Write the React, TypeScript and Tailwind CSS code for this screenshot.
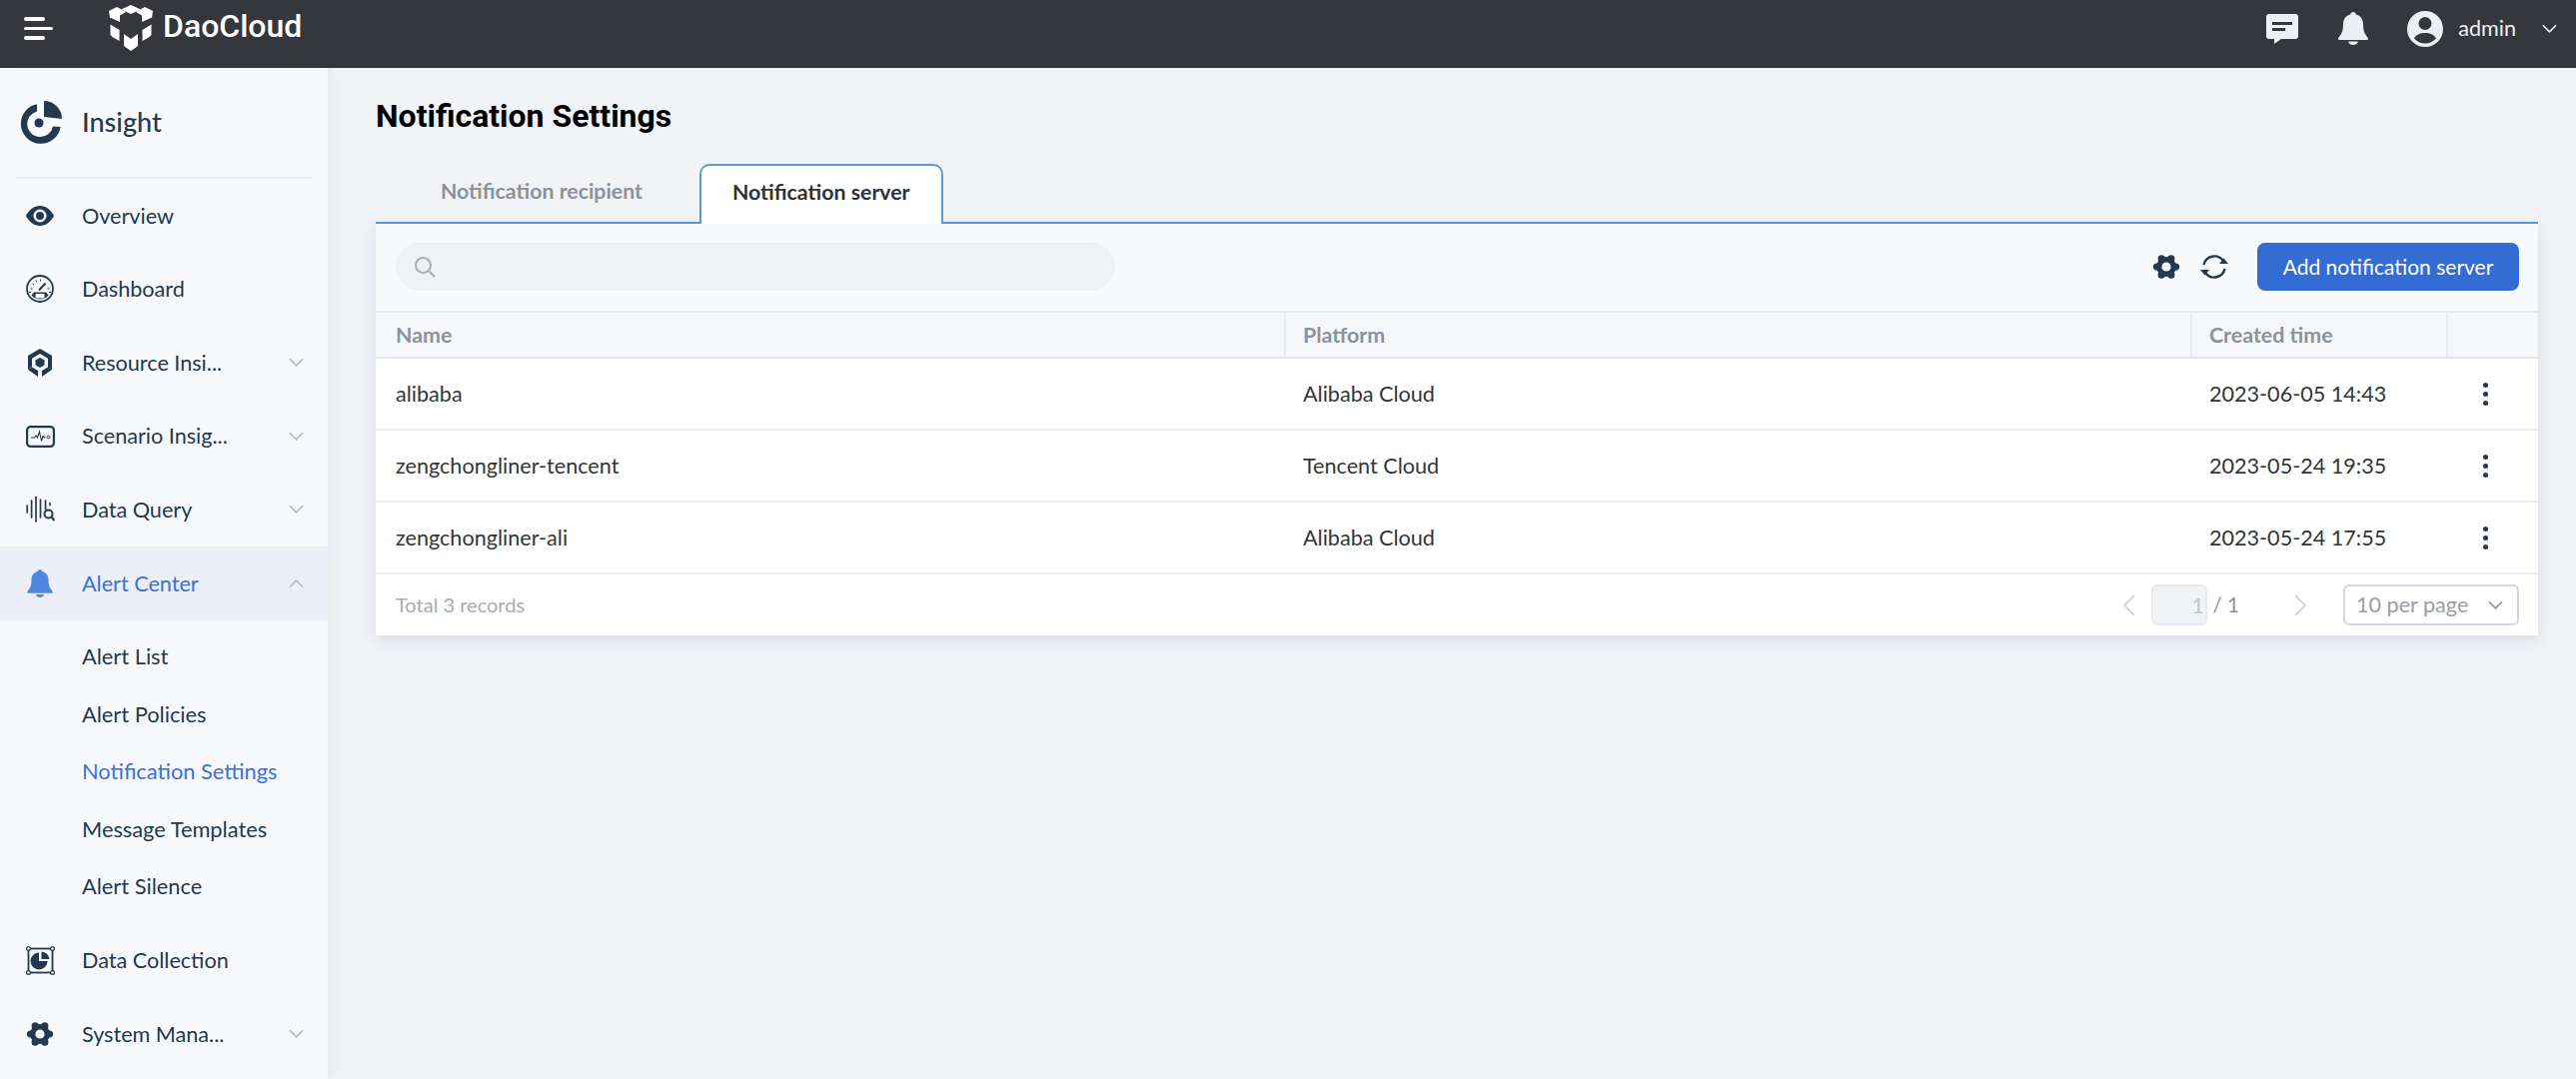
import React from 'react';

const navText = "text-[21.6px] text-[#24394f]";

function Chevron({ up = false, className = "" }: { up?: boolean; className?: string }) {
  return (
    <svg viewBox="0 0 16 10" className={`w-[15px] h-[10px] ${className}`} fill="none" stroke="currentColor" strokeWidth="1.8">
      <path d={up ? "M1 9 8 2l7 7" : "M1 1l7 7 7-7"} />
    </svg>
  );
}

function Gear({ className = "" }: { className?: string }) {
  return (
    <svg viewBox="0 0 28 28" className={className} fill="#24394f">
      <circle cx="14" cy="14" r="10" />
      <circle cx="4.5" cy="14" r="3.6" />
      <circle cx="23.5" cy="14" r="3.6" />
      <circle cx="9.2" cy="5.8" r="3.6" />
      <circle cx="18.8" cy="5.8" r="3.6" />
      <circle cx="9.2" cy="22.2" r="3.6" />
      <circle cx="18.8" cy="22.2" r="3.6" />
      <circle cx="14" cy="14" r="4.6" fill="#f8f9fb" />
    </svg>
  );
}

function Bell({ className = "", fill }: { className?: string; fill: string }) {
  return (
    <svg viewBox="0 0 30 33" className={className} fill={fill}>
      <path d="M15 0c1.5 0 2.6 1 2.8 2.4 4.6 1.2 7.2 5 7.2 9.600 0 5.500 1 9.500 3.700 12.400.9 1 1.300 1.700 1.300 2.400 0 .8-.7 1.200-1.700 1.200H1.700C.7 28 0 27.600 0 26.800c0-.7.400-1.400 1.300-2.400C4 21.500 5 17.500 5 12c0-4.600 2.600-8.400 7.200-9.600C12.400 1 13.500 0 15 0Z" />
      <path d="M10.200 29.500h9.600c-.2 2-2.200 3.500-4.800 3.500s-4.600-1.500-4.800-3.500Z" />
    </svg>
  );
}

const icons: Record<string, React.ReactNode> = {
  eye: (
    <svg viewBox="0 0 28 20" className="w-[28px] h-[20px]" fill="#24394f">
      <path fillRule="evenodd" d="M14 0c6 0 11 4 14 10-3 6-8 10-14 10S3 16 0 10C3 4 8 0 14 0Zm0 3.5a6.5 6.5 0 1 0 0 13 6.5 6.5 0 0 0 0-13Zm0 2.5a4 4 0 1 1 0 8 4 4 0 0 1 0-8Z" />
    </svg>
  ),
  dash: (
    <svg viewBox="0 0 28 28" className="w-[28px] h-[28px]" fill="none" stroke="#24394f">
      <circle cx="14" cy="14" r="13" strokeWidth="1.8" />
      <path d="M5.5 20.5A11 11 0 0 0 22.5 20.5L20 17.500H8Z" fill="#24394f" strokeWidth="0" />
      <rect x="9.5" y="19" width="9" height="4.5" rx="1" fill="#f7f9fc" strokeWidth="0" />
      <path d="M13 15.5l6.5-7" strokeWidth="2" />
      <path d="M4.5 14h2M6.5 9l1.5 1M10 5.5l.7 1.700M14.5 4.500v2M21.5 14h2M3 17.500h2M25 17.500h-2" strokeWidth="1" />
    </svg>
  ),
  hex: (
    <svg viewBox="0 0 24 28" className="w-[24px] h-[28px]" fill="#24394f">
      <path d="M12 0l4.5 2.600-4.500 2.500-8 4.600v8.800l-4 2.300V7ZM12 0l12 7v14l-4-2.300V9.700l-8-4.600Z" />
      <path d="M0 21l4-2.500 6 3.600V28Z M24 21l-4-2.500-6 3.600V28Z" />
      <path d="M12 9l4.5 2.500v5L12 19l-4.500-2.500v-5Z" />
    </svg>
  ),
  monitor: (
    <svg viewBox="0 0 29 22" className="w-[29px] h-[22px]" fill="none" stroke="#24394f">
      <rect x="1.1" y="1.1" width="26.8" height="19.8" rx="3.5" strokeWidth="2.2" />
      <path d="M5 12h3.5l1.500-2 1.500 2 2-6 2 9.500 1.500-5 1.500 1.500h1" strokeWidth="1.1" />
      <circle cx="22.5" cy="11.5" r="1.4" strokeWidth="1" />
    </svg>
  ),
  query: (
    <svg viewBox="0 0 29 26" className="w-[29px] h-[26px]" fill="none" stroke="#24394f">
      <path d="M1.2 9v7M5.6 4v17M10 0v25M14.5 3v18M19.5 4v9M24 6.5v2" strokeWidth="1.7" strokeLinecap="round" />
      <circle cx="22.5" cy="17.5" r="4" strokeWidth="2" />
      <path d="M25.5 20.5l3 3.5" strokeWidth="2.2" />
    </svg>
  ),
  bell: <Bell className="w-[26px] h-[28px]" fill="#4f86e0" />,
  collect: (
    <svg viewBox="0 0 29 29" className="w-[29px] h-[29px]" fill="none" stroke="#24394f">
      <rect x="2.5" y="2.5" width="24" height="24" strokeWidth="1.8" />
      <path d="M13 6.500v8.500h8.500A8.500 8.500 0 1 1 13 6.500Z" fill="#24394f" strokeWidth="0" />
      <path d="M15.5 5.5a8.5 8.5 0 0 1 8 7.500h-8Z" fill="#24394f" strokeWidth="0" />
      <g fill="#f7f9fc" strokeWidth="1.2">
        <circle cx="2.5" cy="2.5" r="1.9" />
        <circle cx="26.5" cy="2.5" r="1.9" />
        <circle cx="2.5" cy="26.5" r="1.9" />
        <circle cx="26.5" cy="26.5" r="1.9" />
      </g>
    </svg>
  ),
  gear: <Gear className="w-[28px] h-[28px]" />,
};

function NavRow({ icon, label, chevron, active }: { icon: string; label: string; chevron?: "up" | "down"; active?: boolean }) {
  return (
    <div className={`h-[73.6px] flex items-center shrink-0 ${active ? "bg-[#ebeff7]" : ""}`}>
      <div className="w-[82px] flex justify-center pr-[2px] shrink-0">{icons[icon]}</div>
      <span className={active ? "text-[21.6px] text-[#3a72d8]" : navText}>{label}</span>
      {chevron && <Chevron up={chevron === "up"} className="ml-auto mr-[24px] text-[#b4b9c2]" />}
    </div>
  );
}

function SubRow({ label, active }: { label: string; active?: boolean }) {
  return (
    <div className={`h-[57.6px] flex items-center pl-[82px] text-[21.8px] ${active ? "text-[#3a72d8]" : "text-[#24394f]"}`}>
      {label}
    </div>
  );
}

const rows = [
  { name: "alibaba", platform: "Alibaba Cloud", time: "2023-06-05 14:43" },
  { name: "zengchongliner-tencent", platform: "Tencent Cloud", time: "2023-05-24 19:35" },
  { name: "zengchongliner-ali", platform: "Alibaba Cloud", time: "2023-05-24 17:55" },
];

function Kebab() {
  return (
    <div className="flex flex-col items-center gap-[4px] pr-[16px]">
      <span className="w-[5px] h-[5px] rounded-full bg-[#24394f]" />
      <span className="w-[5px] h-[5px] rounded-full bg-[#24394f]" />
      <span className="w-[5px] h-[5px] rounded-full bg-[#24394f]" />
    </div>
  );
}

export default function App() {
  return (
    <div className="h-[1080px] w-[2578px] overflow-hidden flex flex-col bg-[#f1f3f7] font-['Lato','Liberation_Sans',sans-serif]">
      <header className="h-[68px] shrink-0 bg-[#36373d] flex items-center pb-[11px]">
        <div className="w-[109px] pl-[24px] shrink-0 flex flex-col gap-[6px]">
          <span className="block w-[21px] h-[3.5px] rounded-full bg-white" />
          <span className="block w-[29px] h-[3.5px] rounded-full bg-white" />
          <span className="block w-[21px] h-[3.5px] rounded-full bg-white" />
        </div>
        <svg viewBox="0 0 44 47" className="w-[44px] h-[47px]" fill="#fff">
          <path d="M22 0l10 4.5L22 9 12 4.5Z" />
          <path d="M0 6l8-4 9 5-6 3.5V17L1 12.5Z" />
          <path d="M44 6l-8-4-9 5 6 3.5V17l10-4.5Z" />
          <path d="M1.500 19.500l9 5.500v11l-7-4-2-2Z" />
          <path d="M42.500 19.500l-9 5.500v11l7-4 2-2Z" />
          <path d="M15 29l7 5 7-5v12l-7 5-7-5Z" />
        </svg>
        <span className="ml-[10px] -mt-[6px] text-[32px] leading-none font-medium text-white font-['Roboto',sans-serif]">DaoCloud</span>
        <div className="ml-auto flex items-center">
          <svg viewBox="0 0 32 30" className="w-[32px] h-[30px]" fill="#eceff6">
            <path d="M3 0h26a3 3 0 0 1 3 3v19a3 3 0 0 1-3 3H15l-7 5v-5H3a3 3 0 0 1-3-3V3a3 3 0 0 1 3-3Z" />
            <path d="M6 8h20v3H6ZM6 14h13v3H6Z" fill="#36373d" />
          </svg>
          <Bell className="ml-[40px] w-[30px] h-[33px]" fill="#eceff6" />
          <svg viewBox="0 0 36 36" className="ml-[39px] w-[36px] h-[36px]" fill="#eceff6">
            <path fillRule="evenodd" d="M18 0a18 18 0 1 1 0 36 18 18 0 0 1 0-36Zm0 6a6.5 6.5 0 1 0 0 13 6.5 6.5 0 0 0 0-13Zm0 16c-5 0-9.500 2-11 5.500 2.700 3 6.700 5 11 5s8.300-2 11-5C27.500 24 23 22 18 22Z" />
          </svg>
          <span className="ml-[15px] text-[21.6px] text-[#eceff6]">admin</span>
          <Chevron className="ml-[26px] mr-[19px] text-[#eceff6]" />
        </div>
      </header>

      <div className="flex-1 flex min-h-0">
        <aside className="w-[328px] shrink-0 bg-[#f7f9fc] shadow-[2px_0_10px_rgba(30,40,70,0.08)] flex flex-col">
          <div className="h-[111px] mx-[16px] border-b-2 border-[#e9ecf1] shrink-0 flex items-center">
            <svg viewBox="0 0 42 43" className="ml-[4px] w-[42px] h-[43px]" fill="#24394f">
              <path d="M24 0a18 18 0 0 1 18 18L24 16Z" />
              <path d="M17 3.2A20 20 0 1 0 40.6 26L33 25.5A13 13 0 1 1 17 10.4Z" />
              <circle cx="19" cy="22" r="4.5" />
            </svg>
            <span className="ml-[20px] text-[27px] font-medium text-[#24394f]">Insight</span>
          </div>
          <NavRow icon="eye" label="Overview" />
          <NavRow icon="dash" label="Dashboard" />
          <NavRow icon="hex" label="Resource Insi..." chevron="down" />
          <NavRow icon="monitor" label="Scenario Insig..." chevron="down" />
          <NavRow icon="query" label="Data Query" chevron="down" />
          <NavRow icon="bell" label="Alert Center" chevron="up" active />
          <div className="pt-[8px] pb-[8px]">
            <SubRow label="Alert List" />
            <SubRow label="Alert Policies" />
            <SubRow label="Notification Settings" active />
            <SubRow label="Message Templates" />
            <SubRow label="Alert Silence" />
          </div>
          <NavRow icon="collect" label="Data Collection" />
          <NavRow icon="gear" label="System Mana..." chevron="down" />
        </aside>

        <main className="flex-1 pl-[48px] pr-[38px] min-w-0">
          <h1 className="h-[96px] flex items-center text-[32px] font-bold text-black font-['Roboto',sans-serif]">Notification Settings</h1>
          <div className="h-[60px] flex items-end border-b-2 border-[#5b9ad6] text-[21.3px] font-bold">
            <div className="w-[324px] h-[58px] pt-[12px] pl-[65px] text-[#8d9199]">Notification recipient</div>
            <div className="w-[244px] h-[60px] -mb-[2px] bg-white border-2 border-b-0 border-[#5b9ad6] rounded-t-[10px] pt-[11px] pl-[31px] text-[#2e3238]">Notification server</div>
          </div>
          <section className="bg-white shadow-[0_4px_14px_rgba(30,40,70,0.12)]">
            <div className="h-[89px] bg-[#f8f9fb] flex items-center pl-[20px] pr-[19px] pb-[1px] border-b-2 border-[#e6e8ec]">
              <div className="w-[720px] h-[48px] rounded-full bg-[#eff1f5] flex items-center pl-[18px]">
                <svg viewBox="0 0 22 22" className="w-[22px] h-[22px]" fill="none" stroke="#a9adb5" strokeWidth="2">
                  <circle cx="9.5" cy="9.5" r="7.5" />
                  <path d="M15 15l6 6" />
                </svg>
              </div>
              <Gear className="ml-auto w-[28px] h-[28px]" />
              <svg viewBox="0 0 28 28" className="ml-[20px] w-[28px] h-[28px]" fill="none" stroke="#24394f" strokeWidth="2.4">
                <path d="M3.5 12A10.8 10.8 0 0 1 22.5 7.5" />
                <path d="M24.5 16A10.8 10.8 0 0 1 5.5 20.5" />
                <path d="M19 11h9l-4.500-5.500ZM0 17h9l-4.500 5.500Z" fill="#24394f" stroke="none" />
              </svg>
              <button className="ml-[29px] w-[262px] h-[48px] rounded-[8px] bg-[#346cd6] text-white text-[21px]">Add notification server</button>
            </div>
            <div className="h-[46px] bg-[#f6f7fa] grid grid-cols-[911px_907px_256px_1fr] items-center border-b-2 border-[#e6e8ec] text-[21.4px] font-bold text-[#8d9199]">
              <div className="pl-[20px] h-full flex items-center border-r-2 border-[#e9ebef]">Name</div>
              <div className="pl-[17px] h-full flex items-center border-r-2 border-[#e9ebef]">Platform</div>
              <div className="pl-[17px] h-full flex items-center border-r-2 border-[#e9ebef]">Created time</div>
              <div />
            </div>
            {rows.map((r) => (
              <div key={r.name} className="h-[72px] grid grid-cols-[911px_907px_256px_1fr] items-center border-b-2 border-[#eceef1] text-[21.6px] text-[#333639]">
                <div className="pl-[20px]">{r.name}</div>
                <div className="pl-[17px]">{r.platform}</div>
                <div className="pl-[17px]">{r.time}</div>
                <Kebab />
              </div>
            ))}
            <div className="h-[61px] flex items-center pl-[20px] pr-[19px]">
              <span className="-mt-[2px] text-[20px] text-[#a7abb2]">Total 3 records</span>
              <svg viewBox="0 0 12 22" className="ml-auto w-[12px] h-[22px]" fill="none" stroke="#cfd2d8" strokeWidth="1.8"><path d="M11 1 1 11l10 10" /></svg>
              <div className="ml-[16px] w-[56px] h-[41px] bg-[#f1f2f4] border-2 border-[#e8e9ed] rounded-[6px] flex items-center justify-end pr-[1px] text-[21px] text-[#c4c7cc]">1</div>
              <span className="ml-[6px] text-[20.5px] text-[#8d9199]">/ 1</span>
              <svg viewBox="0 0 12 22" className="ml-[55px] w-[12px] h-[22px]" fill="none" stroke="#cfd2d8" strokeWidth="1.8"><path d="M1 1l10 10L1 21" /></svg>
              <div className="ml-[37px] w-[176px] h-[41px] border-2 border-[#d4d6dc] rounded-[6px] flex items-center pl-[11px] pr-[14px] text-[21.6px] text-[#9a9ea6]">
                10 per page
                <Chevron className="ml-auto text-[#8d9199]" />
              </div>
            </div>
          </section>
        </main>
      </div>
    </div>
  );
}
